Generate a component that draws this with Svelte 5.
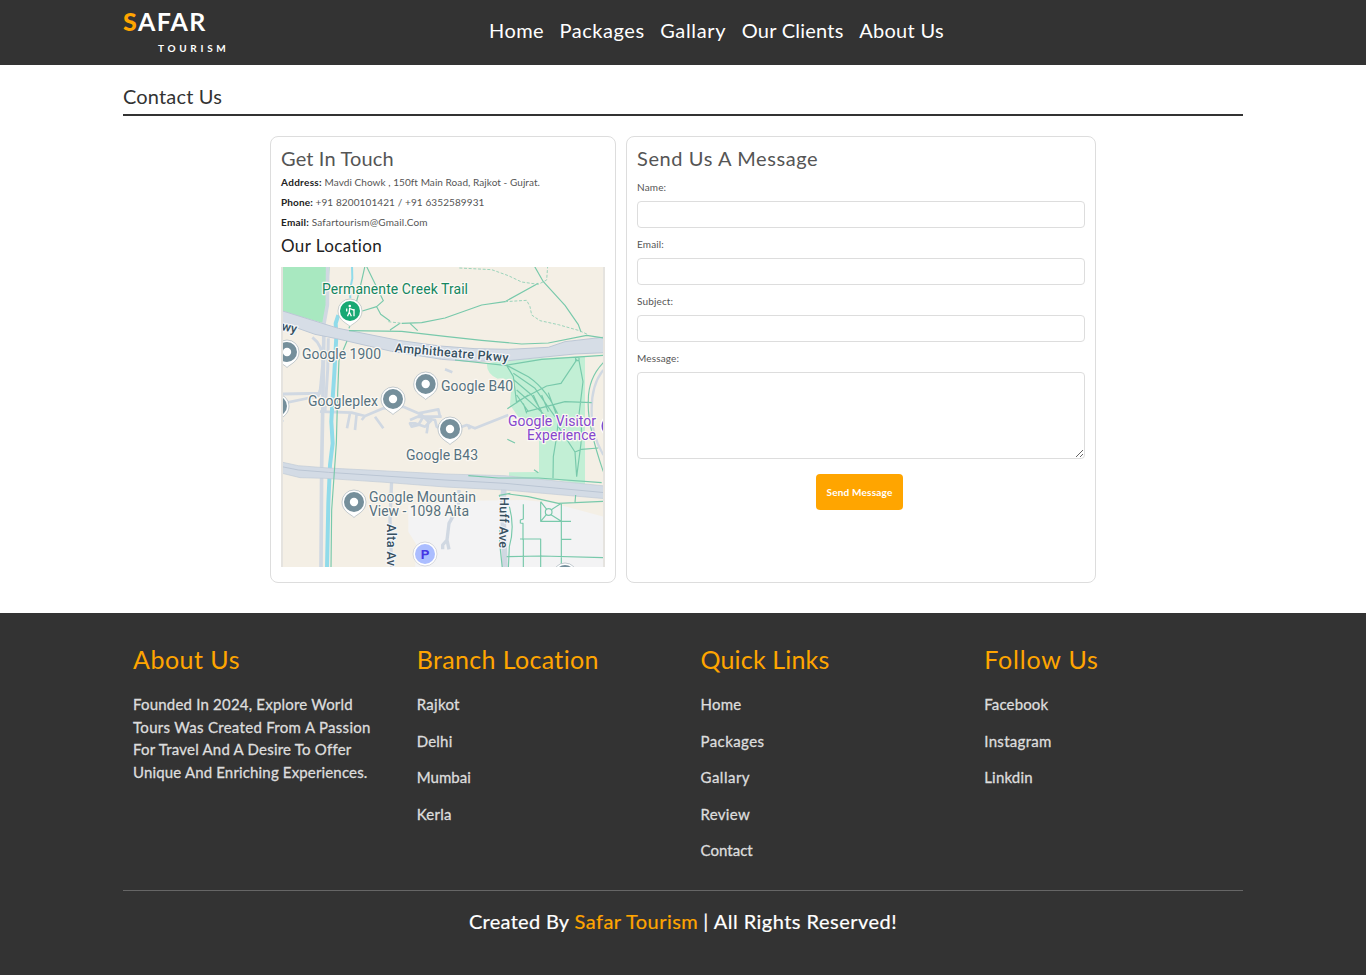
<script>
  const nav = [
    { label: 'Home', track: 0.42 },
    { label: 'Packages', track: 0.53 },
    { label: 'Gallary', track: 0.65 },
    { label: 'Our Clients', track: 0.23 },
    { label: 'About Us', track: 0.29 }
  ];

  const details = [
    { label: 'Address:', text: 'Mavdi Chowk , 150ft Main Road, Rajkot - Gujrat.', track: 0.065, lead: 0.31 },
    { label: 'Phone:', text: '+91 8200101421 / +91 6352589931', track: 0.11, lead: 0.14 },
    { label: 'Email:', text: 'Safartourism@Gmail.Com', track: 0.19, lead: 0.24 }
  ];

  const fields = [
    { id: 'name', label: 'Name:', type: 'text' },
    { id: 'email', label: 'Email:', type: 'email' },
    { id: 'subject', label: 'Subject:', type: 'text' }
  ];

  const about = [
    { label: 'Founded In 2024, Explore World', track: 0.2 },
    { label: 'Tours Was Created From A Passion', track: 0.3 },
    { label: 'For Travel And A Desire To Offer', track: 0.22 },
    { label: 'Unique And Enriching Experiences.', track: 0.156 }
  ];

  const columns = [
    { title: 'Branch Location', track: 0.35, links: [
      { label: 'Rajkot', track: 0.29 }, { label: 'Delhi', track: 0.2 }, { label: 'Mumbai', track: 0.01 }, { label: 'Kerla', track: 0.25 }] },
    { title: 'Quick Links', track: 0.17, links: [
      { label: 'Home', track: 0.25 }, { label: 'Packages', track: 0.43 }, { label: 'Gallary', track: 0.5 }, { label: 'Review', track: 0.31 }, { label: 'Contact', track: 0.04 }] },
    { title: 'Follow Us', track: 0.8, links: [
      { label: 'Facebook', track: 0.15 }, { label: 'Instagram', track: 0.31 }, { label: 'Linkdin', track: 0.17 }] }
  ];

  const pins = [[287, 352], [425.7, 384], [393, 399], [450, 429], [354, 502], [277, 406], [565, 575]];
</script>

<header>
  <div class="wrap bar">
    <a class="logo" href="#top"><span class="name"><b>S</b>AFAR</span><span class="sub">TOURISM</span></a>
    <nav>
      {#each nav as item}<a href="#top" style="letter-spacing:{item.track}px">{item.label}</a>{/each}
    </nav>
  </div>
</header>

<main class="wrap">
  <h1>Contact Us</h1>
  <div class="cards">
    <section class="card">
      <h2 class="touch">Get In Touch</h2>
      {#each details as d}
        <p class="detail"><strong style="letter-spacing:{d.lead}px">{d.label}</strong> <span style="letter-spacing:{d.track}px">{d.text}</span></p>
      {/each}
      <h3>Our Location</h3>
      <svg class="map" viewBox="281 267 324 300" width="324" height="300">
        <defs>
          <clipPath id="area"><rect x="283" y="267" width="320" height="300" /></clipPath>
        </defs>
        <rect x="281" y="267" width="324" height="300" fill="#e5e3df" />
        <g clip-path="url(#area)">
          <rect x="283" y="267" width="320" height="300" fill="#f4efe5" />
          <g transform="translate(275 260) scale(.333333)" fill="none" stroke-linejoin="round">
            <path fill="#f3f3f4" d="M400 735 L590 722 L745 720 L830 728 L985 770 V925 H420 L425 855 L400 815Z" />
            <path fill="#a8e8c0" d="M24 18H165L154 130L146 190L24 155Z" />
            <path fill="#c2efd5" d="M640 310 L690 300 L930 288 V674 L850 660 L702 658 V637 L792 636 V490 L730 470 L705 435 L710 372 Q690 350 668 356 Q633 340 636 310Z" />

            <g stroke="#d0d8e2" stroke-width="11">
              <path d="M158 20L157 135L147 190L144 400L140 620L138 925" />
              <path d="M112 232Q150 260 142 325L135 400L24 402M160 235L158 330L150 455" stroke-width="9" />
              <path d="M24 430L130 408L135 390M135 455L230 458L270 468L325 445L385 440L430 460L490 448L495 470M430 470L480 480L485 500L520 515L575 495L600 505L700 465M405 480L440 465L460 485L455 520M225 460L216 505M245 460L240 510M300 470L325 505M270 468L260 480" stroke-width="8" />
              <path d="M470 480L450 500L420 490L405 490L410 500L430 495L445 470L500 470M580 495L584 508M24 480L10 500M510 328L532 337" stroke-width="8" />
              <path d="M350 660L345 780L350 925M552 690L550 740L522 790L516 840L503 855V868M516 840L522 868" stroke-width="10" />
              <path d="M687 680L683 740L690 925" stroke-width="17" />
              <path d="M985 330Q948 375 950 455Q948 520 985 585" stroke-width="7" />
            </g>

            <g stroke="#90dbea">
              <path d="M231 18L232 55L225 90L226 115" stroke-width="6" />
              <path d="M190 165L182 190L184 230L178 340L172 430L169 485L173 550L165 615L160 730L156 925" stroke-width="12" />
            </g>

            <path fill="#d6dde6" stroke="#bcc7d5" stroke-width="3" d="M10 149L190 205L370 241L495 258L600 266L700 268L820 262L870 245L990 231V278L900 282L700 302L580 304L500 298L350 274L185 236L120 223L10 184Z" />
            <path fill="#d3dbe5" stroke="#bfcad7" stroke-width="2" d="M10 604L70 617L160 624L510 642L690 647L990 678V716L690 690L510 681L330 667L150 655L75 653L10 637Z" />
            <path stroke="#bbc6d4" stroke-width="3" d="M10 618L70 630L160 637L510 660L690 670L990 698" />

            <g stroke="#78c9ab" stroke-width="3.500">
              <path d="M270 18L250 105L222 205M275 20L325 122L305 140L262 153M305 140L317 163L345 183M380 190L440 188L510 174L620 135L690 125L790 70M405 190L428 212M375 190L345 210M222 212L380 214L510 229L620 241L740 252L820 249L935 226L985 234M216 243L192 300L188 400L184 550L170 750L168 925" />
              <path d="M778 18L805 65L870 136L910 194L918 216" />
              <path d="M540 300L690 316L800 298L985 286M695 316L760 350Q820 390 855 478M695 316L715 350L725 430M715 340L780 385L840 470M717 360L770 405L800 455M725 390L815 470M725 405L760 455M725 425L815 378L858 370L906 298M697 446L760 405M755 455L870 425L950 428M906 292H912V302H902V292ZM912 302L924 365L910 480M985 308Q940 355 940 420Q935 490 985 635M745 430L755 460M775 405L810 480M800 405L820 455M820 398L850 480" />
              <path d="M850 480L845 530L835 590L834 655M850 500L900 576L905 650M920 480L918 550L905 650M900 576L920 568L970 564M697 538L720 549M777 629L790 638" />
              <path d="M580 647L670 654L790 654L980 668M700 702L760 710L850 730L985 724M706 700L673 706L677 720M703 740Q720 800 703 860L700 925M675 810L674 850L682 925M745 733V777L736 780V789L744 790V840M735 837H797V925M745 837V925M695 890L800 888L985 893M797 725V784H888M859 730V925M859 838H889M902 705L900 728M797 725L815 748M828 764L859 784M859 730L829 749M797 784L814 764" />
              <circle cx="821" cy="756" r="10" />
              <path stroke-dasharray="9 5" stroke-width="3" stroke="#9bd3bb" d="M553 24L650 29L700 47L740 66L790 73L815 60L818 18M690 125L755 121L765 140L770 165L795 182L850 194L910 211L940 224M340 185L380 190" />
            </g>
          </g>

          {#each pins as [x, y]}
            <g transform="translate({x} {y})">
              <path d="M0 15.500C-2.500 12.500-12 9.500-12 0A12 12 0 0 1 12 0C12 9.500 2.500 12.500 0 15.500Z" fill="#fff" stroke="#a9b4bb" stroke-width=".7" />
              <circle r="10" fill="#758f9b" />
              <circle r="4.200" fill="#fff" />
            </g>
          {/each}

          <g transform="translate(350 311)">
            <path d="M0 15.500C-2.500 12.500-12 9.500-12 0A12 12 0 0 1 12 0C12 9.500 2.500 12.500 0 15.500Z" fill="#fff" stroke="#b5bcba" stroke-width=".7" />
            <circle r="10" fill="#18a974" />
            <circle cx="-.2" cy="-5" r="1.300" fill="#fff" />
            <path d="M-.3-3.200L-.7 1L1.400 5.200M-.7 1L-2.500 5.200M-.2-2.500L3.800-.8M4-2V5.200M-3.300-2.500V.5" stroke="#fff" stroke-width="1.300" fill="none" />
          </g>

          <g transform="translate(425 554)">
            <circle r="12" fill="#fff" stroke="#c7c9ce" stroke-width=".7" />
            <circle r="10" fill="#abbdff" />
            <text class="park" x="-4.200" y="5">P</text>
          </g>

          <g transform="translate(611.500 426)">
            <circle r="11.500" fill="#fff" />
            <circle r="10" fill="#7d4bd0" />
          </g>

          <g class="place">
            <text x="322" y="294" textLength="146" class="trail">Permanente Creek Trail</text>
            <text x="302" y="359" textLength="79">Google 1900</text>
            <text x="441" y="391" textLength="72">Google B40</text>
            <text x="308" y="406" textLength="70">Googleplex</text>
            <text x="406" y="460" textLength="72">Google B43</text>
            <text x="369" y="502" textLength="107">Google Mountain</text>
            <text x="369" y="516" textLength="100">View - 1098 Alta</text>
            <text x="508" y="426" textLength="88" class="visit">Google Visitor</text>
            <text x="527" y="440" textLength="69" class="visit">Experience</text>
          </g>
          <g class="road">
            <text transform="translate(394.500 352) rotate(5)" textLength="114">Amphitheatre Pkwy</text>
            <text transform="translate(281 330) rotate(12)">wy</text>
            <text transform="translate(387 524) rotate(90)" textLength="42">Alta Av</text>
            <text transform="translate(500 497) rotate(91)" textLength="51">Huff Ave</text>
          </g>
        </g>
      </svg>
    </section>

    <section class="card">
      <h2 class="send">Send Us A Message</h2>
      <form onsubmit={(e) => e.preventDefault()}>
        {#each fields as f}
          <label for={f.id}>{f.label}</label>
          <input id={f.id} type={f.type} />
        {/each}
        <label for="message">Message:</label>
        <textarea id="message"></textarea>
        <button type="submit">Send Message</button>
      </form>
    </section>
  </div>
</main>

<footer>
  <div class="wrap">
    <div class="columns">
      <div class="col">
        <h4 style="letter-spacing:.5px">About Us</h4>
        <p class="about">{#each about as line}<span style="letter-spacing:{line.track}px">{line.label}</span>{/each}</p>
      </div>
      {#each columns as c}
        <div class="col">
          <h4 style="letter-spacing:{c.track}px">{c.title}</h4>
          {#each c.links as l}<a href="#top" style="letter-spacing:{l.track}px">{l.label}</a>{/each}
        </div>
      {/each}
    </div>
    <p class="credit"><span class="by">Created By</span> <span class="brand">Safar Tourism</span> <span class="rights">| All Rights Reserved!</span></p>
  </div>
</footer>

<style>
  :global(body) { margin: 0; background: #fff; }
  header, main, footer { font-family: Lato, "Open Sans", sans-serif; }
  *, *::before { box-sizing: border-box; }
  h1, h2, h3, h4, p { margin: 0; font-weight: 400; }
  a { text-decoration: none; }
  .wrap { width: 1120px; margin: 0 auto; }

  header { background: #333; height: 65px; }
  .bar { display: grid; grid-template-columns: 366px 1fr; height: 65px; }
  .logo { display: flex; flex-direction: column; color: #fff; }
  .name { font-size: 25px; line-height: 30px; margin-top: 6px; font-weight: 700; letter-spacing: 1.25px; }
  .name b { color: orange; }
  .sub { font-size: 10px; line-height: 12px; margin: 6px 0 0 35px; font-weight: 700; letter-spacing: 3.7px; }
  nav { display: flex; gap: 15.600px; padding-top: 18px; }
  nav a { color: #fff; font-size: 20px; line-height: 25px; white-space: nowrap; }

  h1 { font-size: 20px; line-height: 30px; letter-spacing: .17px; color: #333; height: 51px; padding-top: 16px; border-bottom: 2px solid #333; }
  .cards { display: grid; grid-template-columns: 346px 470px; gap: 10px; justify-content: center; padding: 20px 0 30px; }
  .card { height: 447px; border: 1px solid #ddd; border-radius: 8px; padding: 10px; }
  h2 { font-size: 20px; line-height: 22px; color: #555; }
  .touch { letter-spacing: .15px; margin-bottom: 3px; }
  .send { letter-spacing: .6px; margin-bottom: 10px; }
  .detail { font-size: 10px; line-height: 20px; color: #555; white-space: nowrap; }
  .detail strong { color: #222; font-weight: 700; }
  h3 { font-size: 17px; line-height: 24px; letter-spacing: .38px; color: #222; margin: 2px 0 9px; height: 24px; }
  .map { display: block; }
  .place text { font: 14px Roboto, sans-serif; fill: #56717f; stroke: #fbf8f2; stroke-width: 2.500px; paint-order: stroke; stroke-linejoin: round; }
  .place .trail { fill: #14865f; }
  .place .visit { fill: #8546ce; }
  .road text { font: 500 12.500px Roboto, sans-serif; fill: #37505f; stroke: #f3f5f8; stroke-width: 2.500px; paint-order: stroke; stroke-linejoin: round; }
  .park { font: 700 13.500px Roboto, sans-serif; fill: #4636e3; }

  form { display: flex; flex-direction: column; }
  label { font-size: 10px; line-height: 16px; height: 22px; letter-spacing: .15px; color: #555; }
  input { height: 27px; margin: 0 0 8px; border: 1px solid #ddd; border-radius: 4px; padding: 5px; background: #fff; }
  textarea { height: 87px; margin: 0; border: 1px solid #ddd; border-radius: 4px; padding: 5px; resize: vertical; background: #fff; }
  button { align-self: center; width: 87px; height: 36px; margin: 15px 3px 0 0; border: 0; border-radius: 4px; background: orange; color: #fff; font: 700 10px Lato, sans-serif; letter-spacing: .2px; padding: 0; }

  footer { background: #333; height: 362px; }
  .columns { display: grid; grid-template-columns: repeat(4, 1fr); column-gap: 15px; height: 278px; padding-top: 30px; border-bottom: 1px solid #666; }
  .col { display: flex; flex-direction: column; padding: 0 10px; }
  h4 { color: orange; font-size: 25px; line-height: 32px; margin-bottom: 18px; white-space: nowrap; }
  .col a, .about { color: #ddd; font-size: 15px; -webkit-text-stroke: .3px #ddd; }
  .col a { line-height: 22px; margin-bottom: 14.500px; }
  .about { line-height: 22.600px; }
  .about span { display: block; white-space: nowrap; }
  .credit { text-align: center; color: #fff; font-size: 20px; line-height: 30px; padding-top: 15px; -webkit-text-stroke: .2px; }
  .by { letter-spacing: .3px; }
  .brand { color: orange; letter-spacing: .44px; }
  .rights { letter-spacing: .48px; }
</style>
